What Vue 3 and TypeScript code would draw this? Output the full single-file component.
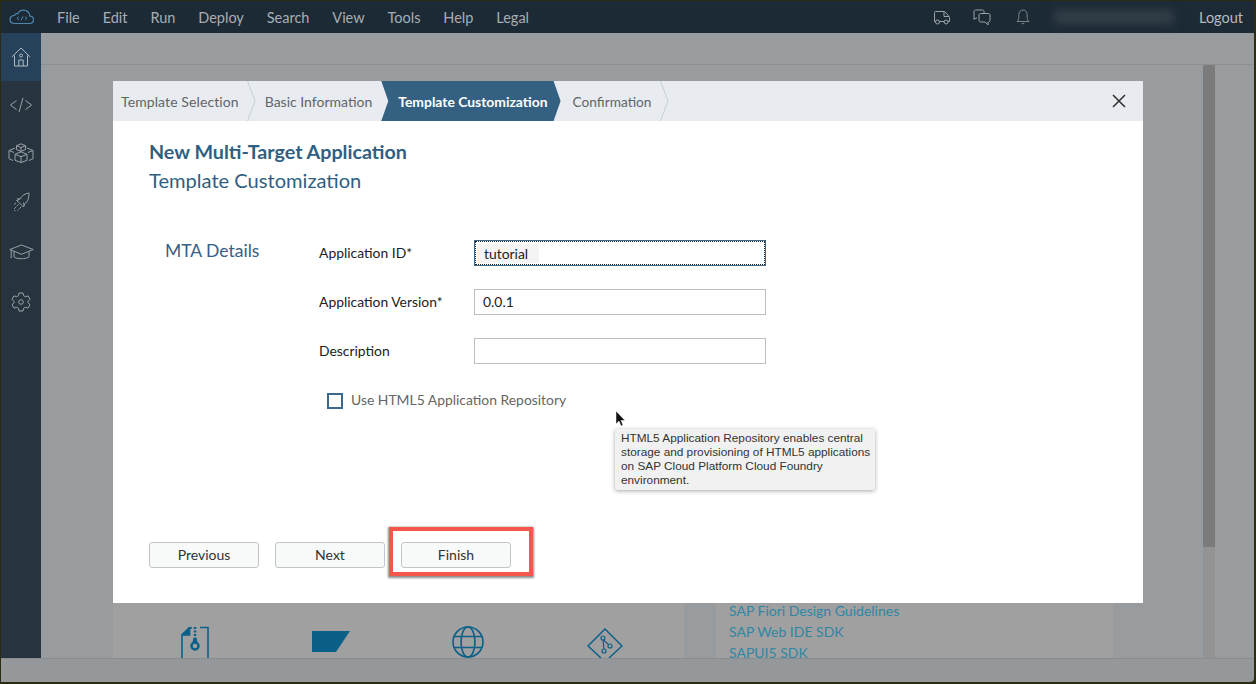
<template>
  <div class="frame">
    <header class="topbar">
      <svg class="logo" width="26" height="16" viewBox="0 0 26 16" fill="none" stroke="#4d87ae" stroke-width="1.2">
        <path d="M6 14.500h14.500c2.400 0 4-1.600 4-3.700 0-2-1.500-3.500-3.500-3.600C20.300 3.500 17.500 1.200 14.500 1.200c-2.700 0-4.700 1.500-5.700 3.600C7.800 4.300 6.200 4.600 5.700 6.300 3 6.500 1 8.300 1 10.500c0 2.300 2 4 5 4z" />
        <path d="M9.800 9.800 8 8.300m1.800-1.500L8 8.300m8.200 1.500L18 8.300m-1.800-1.500L18 8.300M14 6.400l-2 4" stroke-width="1" transform="translate(0 1)" />
      </svg>
      <nav class="menu">
        <span v-for="item in menuItems" :key="item">{{ item }}</span>
      </nav>
      <div class="topright">
        <svg width="18" height="15" viewBox="0 0 18 15" fill="none" stroke="#9da3a8" stroke-width="1">
          <path d="M3 11.500H1.500V2.500c0-.6.400-1 1-1h8.500c.5 0 1 .2 1.300.6l3.700 4.400c.3.300.5.700.5 1.100v3.900H15M6 11.500h5.500M11 1.800v4.700h5" />
          <circle cx="4.500" cy="12" r="2" />
          <circle cx="13" cy="12" r="2" />
        </svg>
        <svg width="18" height="17" viewBox="0 0 18 17" fill="none" stroke="#9da3a8" stroke-width="1">
          <path d="M4 9H3L1 10.500V2.500c0-.8.500-1.500 1.500-1.500h7c1 0 1.500.7 1.500 1.500V4" />
          <path d="M7.500 4.500h8c.8 0 1.500.6 1.500 1.500v5.500c0 .8-.7 1.500-1.500 1.500H15v3l-3-3H7.500c-.8 0-1.500-.7-1.500-1.500V6c0-.9.700-1.500 1.500-1.500z" />
        </svg>
        <svg class="bell" width="14" height="16" viewBox="0 0 14 16" fill="none" stroke="#7d858b" stroke-width="1">
          <path d="M1 12.500h12c-1-1-1.800-2-1.800-4V6C11.200 3 9.500 1 7 1S2.800 3 2.800 6v2.500c0 2-.8 3-1.800 4zM5.500 14c.3 1 2.700 1 3 0" />
        </svg>
        <div class="username"></div>
        <span class="logout">Logout</span>
      </div>
    </header>

    <div class="middle">
      <aside class="sidebar">
        <div class="side-item active">
          <svg width="20" height="20" viewBox="0 0 20 20" fill="none" stroke="#b3bac0" stroke-width="1">
            <path d="M.8 10 10 1l9.200 9M3.500 8.500v10.500h13V8.500M7.800 19v-6h4.400v6" />
            <circle cx="10" cy="8.500" r="1.500" />
          </svg>
        </div>
        <div class="side-item">
          <svg width="24" height="16" viewBox="0 0 24 16" fill="none" stroke="#9aa1a7" stroke-width="1">
            <path d="M7.500 3.500 1.500 8l6 4.500M16.500 3.500l6 4.500-6 4.500M14 .8 10 15.200" />
          </svg>
        </div>
        <div class="side-item">
          <svg width="26" height="20" viewBox="0 0 26 20" fill="none" stroke="#9aa1a7" stroke-width="1">
            <path d="m13 .8 4.500 1.900v3.800L13 8.400 8.500 6.500V2.700zM8.500 2.700 13 4.600l4.500-1.900M13 4.600v3.800" />
            <path d="M7 5 1 7.500v8.200l4 1.800M19 5l6 2.500v8.200l-4 1.800" />
            <path d="m13 8.800 6 2.500v6L13 19.500l-6-2.200v-6zM7 11.300l6 2.400 6-2.400M13 13.700v5.800M1 7.500l5 2M25 7.500l-5 2" />
          </svg>
        </div>
        <div class="side-item">
          <svg width="17" height="20" viewBox="0 0 17 20" fill="none" stroke="#9aa1a7" stroke-width="1">
            <path d="M16 1c-4 .5-7 2.500-9.500 6.500l-3 1 2.500 2L9 13.500l1.500 1.500 1-3c3.500-2.500 4.500-6 4.500-11zM7 7l-3-.2M10.500 10.500l.8 3" />
            <path d="M5.500 12.500 1 17M8 15l-3.500 3.800M3 10.800l-2 2M1.500 19l1-1" stroke-dasharray="2.500 1.200" />
          </svg>
        </div>
        <div class="side-item">
          <svg width="25" height="16" viewBox="0 0 25 16" fill="none" stroke="#9aa1a7" stroke-width="1">
            <path d="M.8 5.500 12.500 1l11.700 4.500-11.700 4.800zM5 7.500v5.300c2 2.500 12.500 2.500 15 0V7.500M2.200 6.200v8" />
          </svg>
        </div>
        <div class="side-item">
          <svg width="20" height="20" viewBox="0 0 20 20" fill="none" stroke="#9aa1a7" stroke-width="1">
            <path d="M8 1h4l.6 2.700 1.700 1 2.700-.8 2 3.400-2 2 .1 1.500 1.900 1.900-2 3.400-2.700-.8-1.700 1L12 19H8l-.6-2.700-1.700-1-2.700.8-2-3.400 2-1.900V9.300l-2-2 2-3.400 2.700.8 1.700-1z" />
            <circle cx="10" cy="10" r="2.300" />
          </svg>
        </div>
      </aside>

      <main class="main">
        <div class="subheader"></div>
        <div class="workspace">
          <div class="panels">
            <section class="panel actions">
              <svg width="28" height="33" viewBox="0 0 28 33" fill="none" stroke="#0a6089" stroke-width="1.600">
                <path d="M1 33V9l7-7h3M19 1.500h8V33" />
                <path d="M1 9h7.500V2z" fill="#0a6089" />
                <path d="M14 1v11" stroke-dasharray="2 1.500" stroke-width="2.500" />
                <path d="M12.500 12h3l1 4h-5z" fill="#0a6089" stroke="none" />
                <circle cx="14" cy="20" r="3.500" stroke-width="2.500" />
              </svg>
              <svg width="38" height="21" viewBox="0 0 38 21">
                <path d="M0 0h38L24 21H0z" fill="#0a6089" />
              </svg>
              <svg width="32" height="32" viewBox="0 0 32 32" fill="none" stroke="#0a6089" stroke-width="1.600">
                <circle cx="16" cy="16" r="15" />
                <ellipse cx="16" cy="16" rx="7" ry="15" />
                <path d="M2 10.500h28M2 21.500h28" />
              </svg>
              <svg width="36" height="30" viewBox="0 0 36 30" fill="none" stroke="#0a6089" stroke-width="1.500">
                <path d="M14 30 1 18 18 1l17 17-13 12" />
                <path d="m16 12 1 9M16.500 12l5 4.500" stroke-width="1.200" />
                <circle cx="16" cy="10" r="2" stroke-width="1.200" />
                <circle cx="23" cy="18" r="2" stroke-width="1.200" />
                <circle cx="17" cy="23" r="2" stroke-width="1.200" />
              </svg>
            </section>
            <section class="panel links">
              <a v-for="link in sdkLinks" :key="link">{{ link }}</a>
            </section>
          </div>
          <div class="track"><div class="thumb"></div></div>
        </div>
      </main>
    </div>

    <footer class="statusbar"></footer>

    <div class="modal">
      <div class="wizard">
        <div
          v-for="(step, i) in steps"
          :key="step"
          class="step"
          :class="{ current: i === currentStep }"
        >
          <span>{{ step }}</span>
          <svg v-if="i !== currentStep && i !== currentStep - 1" class="chev" width="9" height="40" viewBox="0 0 9 40" fill="none" stroke="#c9ced2">
            <path d="M.5 0 8 20 .5 40" />
          </svg>
        </div>
        <svg class="close" width="14" height="14" viewBox="0 0 14 14" fill="none" stroke="#2c2c2c" stroke-width="1.500">
          <path d="m1 1 12 12M13 1 1 13" />
        </svg>
      </div>

      <div class="content">
        <h1>New Multi-Target Application</h1>
        <h2>Template Customization</h2>

        <div class="details">
          <div class="section-name">MTA Details</div>
          <div class="fields">
            <label class="row">
              <span>Application ID*</span>
              <div class="input focused"><em>tutorial</em></div>
            </label>
            <label class="row">
              <span>Application Version*</span>
              <div class="input">0.0.1</div>
            </label>
            <label class="row">
              <span>Description</span>
              <div class="input"></div>
            </label>
            <div class="check">
              <i></i>
              <span>Use HTML5 Application Repository</span>
            </div>
          </div>
        </div>

        <div class="buttons">
          <button>Previous</button>
          <button>Next</button>
          <button class="finish">Finish</button>
        </div>
      </div>

      <div class="tooltip">
        HTML5 Application Repository enables central storage and provisioning of HTML5 applications on SAP Cloud Platform Cloud Foundry environment.
      </div>
      <svg class="pointer" width="11" height="17" viewBox="0 0 11 17">
        <path d="M1 0v13l3-3 2 5 2-1-2-4.500h4z" fill="#111" stroke="#fff" stroke-width=".5" />
      </svg>
    </div>
  </div>
</template>

<script setup lang="ts">
const menuItems: string[] = ['File', 'Edit', 'Run', 'Deploy', 'Search', 'View', 'Tools', 'Help', 'Legal']
const steps: string[] = ['Template Selection', 'Basic Information', 'Template Customization', 'Confirmation']
const currentStep = 2
const sdkLinks: string[] = ['SAP Fiori Design Guidelines', 'SAP Web IDE SDK', 'SAPUI5 SDK']
</script>

<style>
html,
body {
  margin: 0;
  background: #2b2c12;
}
</style>

<style scoped>
.frame {
  position: relative;
  width: 1256px;
  height: 684px;
  box-sizing: border-box;
  padding: 1px 2px 2px 1px;
  display: flex;
  flex-direction: column;
  overflow: hidden;
  font-family: Lato, "Liberation Sans", sans-serif;
  background: #2b2c12;
}

.topbar {
  height: 32px;
  flex: none;
  display: flex;
  align-items: center;
  background: #1c2a36;
  color: #a8aeb3;
  font-size: 14.5px;
}

.logo {
  margin-left: 8px;
  flex: none;
}

.menu {
  display: flex;
  gap: 22.9px;
  margin-left: 22px;
}

.topright {
  margin-left: auto;
  display: flex;
  align-items: center;
}

.topright svg + svg {
  margin-left: 22px;
}

.topright .bell {
  margin-left: 25px;
}

.username {
  width: 120px;
  height: 14px;
  margin: 0 25px 0 24px;
  background: #333e48;
  filter: blur(5px);
}

.logout {
  margin-right: 11px;
  color: #b7bbbe;
}

.middle {
  flex: 1;
  display: flex;
  min-height: 0;
}

.sidebar {
  width: 40px;
  flex: none;
  background: #27343f;
}

.side-item {
  height: 48px;
  display: flex;
  align-items: center;
  justify-content: center;
}

.side-item:nth-child(4) {
  margin-top: 1px;
}

.side-item:nth-child(n + 5) {
  margin-top: 2px;
}

.side-item.active {
  background: #26425a;
}

.main {
  flex: 1;
  min-width: 0;
  display: flex;
  flex-direction: column;
  background: #999c9f;
}

.subheader {
  height: 32px;
  flex: none;
  box-sizing: border-box;
  border-bottom: 1px solid #8d9093;
}

.workspace {
  flex: 1;
  min-height: 0;
  display: flex;
  overflow: hidden;
}

.panels {
  width: 1162px;
  flex: none;
  display: flex;
  gap: 32px;
  padding: 39px 0 0 72px;
  box-sizing: border-box;
}

.panel {
  background: #a0a0a0;
  box-sizing: border-box;
}

.actions {
  width: 571px;
  display: flex;
  justify-content: space-between;
  align-items: flex-start;
  padding: 522px 61px 0 68px;
}

.actions svg:nth-child(2) {
  margin-top: 5px;
}

.actions svg:nth-child(4) {
  margin-top: 2px;
}

.links {
  width: 397px;
  padding: 503px 0 0 13px;
  display: flex;
  flex-direction: column;
  gap: 13px;
  font-size: 14px;
  line-height: 8px;
  color: #2e87a4;
}

.track {
  width: 12px;
  flex: none;
  background: #939393;
}

.thumb {
  height: 482px;
  background: #7b7b7b;
  border-radius: 2px 2px 0 0;
}

.statusbar {
  height: 23px;
  flex: none;
  border-top: 1px solid #8a8d8f;
  background: #95989a;
  border-radius: 0 0 4px 0;
}

.modal {
  position: absolute;
  left: 113px;
  top: 81px;
  width: 1030px;
  height: 522px;
  background: #fff;
}

.wizard {
  height: 40px;
  display: flex;
  align-items: stretch;
  background: #e8ecf0;
  font-size: 14px;
  color: #616569;
}

.step {
  display: flex;
  align-items: center;
}

.step:nth-child(1) {
  padding-left: 8px;
  letter-spacing: 0.1px;
}

.step:nth-child(1) .chev {
  margin-left: 8px;
}

.step:nth-child(2) {
  padding-left: 9px;
  padding-right: 9px;
}

.step.current {
  padding: 0 13px 0 17px;
  color: #fff;
  font-size: 13.9px;
  font-weight: 700;
  background: #346082;
  clip-path: polygon(0 0, calc(100% - 7px) 0, 100% 50%, calc(100% - 7px) 100%, 0 100%, 7px 50%);
}

.step:nth-child(4) {
  padding-left: 12px;
  font-size: 13.7px;
}

.step:nth-child(4) .chev {
  margin-left: 8px;
}

.close {
  margin: 13px 17px 0 auto;
}

.content {
  padding: 19px 36px 0;
}

h1,
h2 {
  margin: 0;
  line-height: 24px;
  color: #2f5f82;
}

h1 {
  font-size: 19.7px;
  font-weight: 700;
}

h2 {
  margin-top: 4px;
  font-size: 20.1px;
  font-weight: 400;
}

.details {
  display: flex;
  margin-top: 48px;
}

.section-name {
  width: 170px;
  height: 22px;
  flex: none;
  padding-left: 16px;
  box-sizing: border-box;
  font-size: 17.5px;
  line-height: 22px;
  color: #346187;
}

.fields {
  display: flex;
  flex-direction: column;
  gap: 23px;
}

.row {
  display: flex;
  align-items: center;
  font-size: 13.9px;
  color: #222;
}

.row > span {
  width: 155px;
  padding-bottom: 2px;
}

.input {
  width: 292px;
  height: 26px;
  box-sizing: border-box;
  border: 1px solid #bfbfbf;
  padding: 0 0 1px 8px;
  display: flex;
  align-items: center;
  color: #222;
}

.input.focused {
  border-color: #3c6a8d;
  outline: 1px dotted #222;
  outline-offset: -2px;
  padding: 0 0 0 2px;
}

.input em {
  font-style: normal;
  background: #f4f4f4;
  padding: 1px 11px 1px 7px;
}

.check {
  display: flex;
  align-items: center;
  gap: 8px;
  margin: 4px 0 0 8px;
  font-size: 13.9px;
  color: #666;
}

.check span {
  padding-bottom: 2px;
}

.check i {
  width: 16px;
  height: 16px;
  box-sizing: border-box;
  border: 2px solid #3c6a8d;
}

.buttons {
  position: absolute;
  left: 36px;
  top: 461px;
  display: flex;
  gap: 16px;
}

button {
  width: 110px;
  height: 26px;
  padding: 0 0 2px;
  background: #f8f9f9;
  border: 1px solid #c3c6c8;
  border-radius: 3px;
  font: inherit;
  font-size: 14px;
  color: #333;
}

.finish {
  position: relative;
}

.finish::after {
  content: "";
  position: absolute;
  left: -13px;
  top: -16px;
  width: 144px;
  height: 49px;
  box-sizing: border-box;
  border: 4px solid #f7564c;
  box-shadow: 0 1px 2px 1px rgba(0, 0, 0, 0.45);
}

.tooltip {
  position: absolute;
  left: 502px;
  top: 348px;
  width: 260px;
  height: 61px;
  box-sizing: border-box;
  padding: 2px 0 0 6px;
  background: #f1f1f1;
  border-radius: 2px;
  box-shadow: 0 1px 4px rgba(0, 0, 0, 0.35);
  font-family: "Liberation Sans", Arial, sans-serif;
  font-size: 11.8px;
  line-height: 14px;
  color: #333;
}

.pointer {
  position: absolute;
  left: 502px;
  top: 330px;
}
</style>
